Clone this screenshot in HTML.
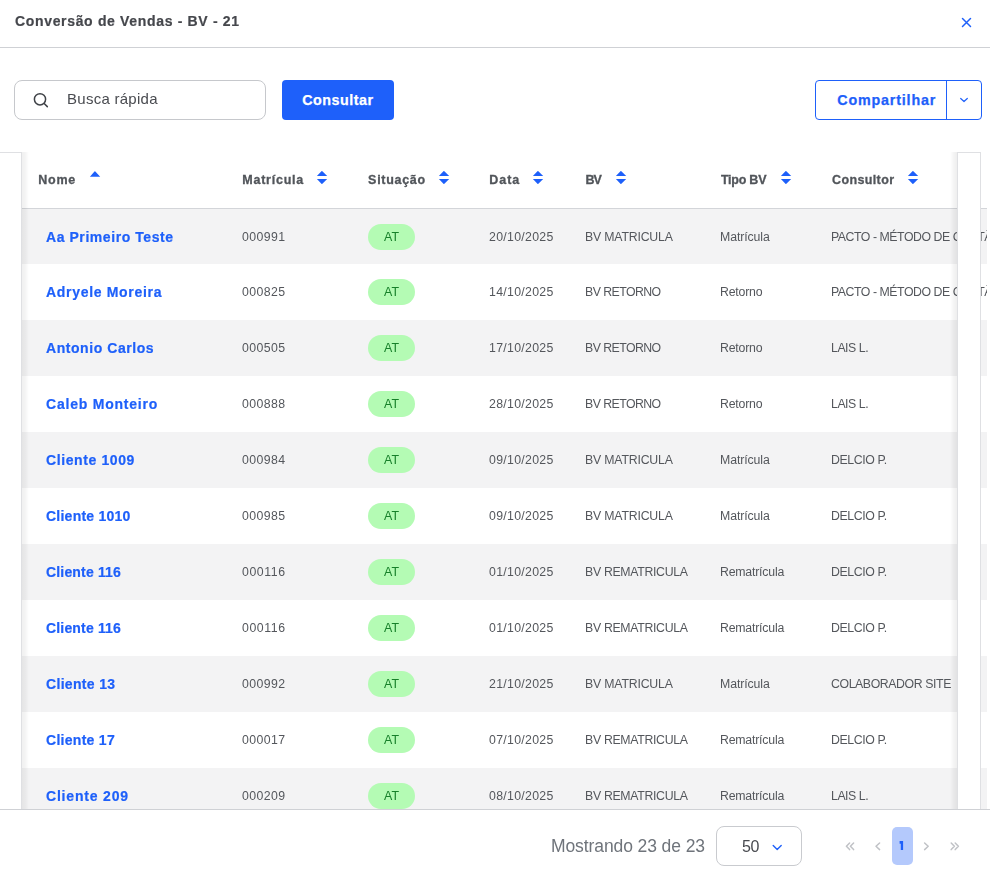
<!DOCTYPE html>
<html><head><meta charset="utf-8"><style>
html,body{margin:0;padding:0;background:#fff}
body{width:990px;height:878px;position:relative;overflow:hidden;font-family:"Liberation Sans",sans-serif}
.a{position:absolute;box-sizing:content-box}
.t{position:absolute;white-space:nowrap}
.g{will-change:transform}
</style></head><body>
<div class="t g" style="left:14.50px;top:14.00px;font-size:14px;line-height:14px;font-weight:700;color:#45474c;letter-spacing:0.664px;-webkit-text-stroke:0.2px #45474c">Conversão de Vendas - BV - 21</div>
<svg class="a" style="left:960px;top:16px" width="13" height="13" viewBox="0 0 13 13"><path d="M2.5 2.5L10.5 10.5M10.5 2.5L2.5 10.5" stroke="#1e60fa" stroke-width="1.5" stroke-linecap="round"/></svg>
<div class="a" style="left:0;top:47px;width:990px;height:1px;background:#cfd1d5"></div>
<div class="a" style="left:14px;top:80px;width:250px;height:38px;border:1px solid #c6c8cc;border-radius:8px"></div>
<svg class="a" style="left:32px;top:91px" width="18" height="18" viewBox="0 0 18 18"><circle cx="8" cy="8.3" r="5.6" fill="none" stroke="#3f4247" stroke-width="1.5"/><path d="M12.2 12.5L15.3 15.6" stroke="#3f4247" stroke-width="1.5" stroke-linecap="round"/></svg>
<div class="t g" style="left:66.90px;top:91.20px;font-size:15px;line-height:15px;font-weight:400;color:#494b50;letter-spacing:0.268px;">Busca rápida</div>
<div class="a" style="left:282px;top:80px;width:112px;height:40px;background:#1e60fa;border-radius:4px"></div>
<div class="t" style="left:302.20px;top:92.55px;font-size:14.3px;line-height:14.3px;font-weight:700;color:#ffffff;letter-spacing:0.531px;-webkit-text-stroke:0.25px #fff">Consultar</div>
<div class="a" style="left:815px;top:80px;width:165px;height:38px;border:1px solid #1e60fa;border-radius:4px"></div>
<div class="a" style="left:946px;top:81px;width:1px;height:38px;background:#1e60fa"></div>
<div class="t" style="left:837.30px;top:92.85px;font-size:14.3px;line-height:14.3px;font-weight:700;color:#1e60fa;letter-spacing:0.818px;-webkit-text-stroke:0.25px #1e60fa">Compartilhar</div>
<svg class="a" style="left:958px;top:95px" width="12" height="10" viewBox="0 0 12 10"><path d="M2.7 3.5L6 6.5L9.3 3.5" fill="none" stroke="#1e60fa" stroke-width="1.2" stroke-linecap="round" stroke-linejoin="round"/></svg>
<div class="a" style="left:0;top:0;width:990px;height:809px;overflow:hidden"><div class="a" style="left:0;top:208px;width:987px;height:56px;background:#f3f3f4"></div><div class="a" style="left:0;top:320px;width:987px;height:56px;background:#f3f3f4"></div><div class="a" style="left:0;top:432px;width:987px;height:56px;background:#f3f3f4"></div><div class="a" style="left:0;top:544px;width:987px;height:56px;background:#f3f3f4"></div><div class="a" style="left:0;top:656px;width:987px;height:56px;background:#f3f3f4"></div><div class="a" style="left:0;top:768px;width:987px;height:56px;background:#f3f3f4"></div><div class="a" style="left:0;top:208px;width:987px;height:1px;background:#d3d5d9"></div><div class="t" style="left:38.30px;top:173.75px;font-size:12.5px;line-height:12.5px;font-weight:700;color:#51555a;letter-spacing:0.750px;-webkit-text-stroke:0.3px #51555a">Nome</div><svg class="a" style="left:88.8px;top:169px" width="12" height="16" viewBox="0 0 12 16"><path d="M0.9 7.8L5.45 2.6Q5.9 2.1 6.35 2.6L11.2 7.8Z" fill="#1e60fa"/></svg><div class="t" style="left:242.30px;top:173.75px;font-size:12.5px;line-height:12.5px;font-weight:700;color:#51555a;letter-spacing:0.756px;-webkit-text-stroke:0.3px #51555a">Matrícula</div><svg class="a" style="left:316.3px;top:169px" width="12" height="17" viewBox="0 0 12 17"><path d="M0.9 7.1L5.45 2.3Q5.9 1.8 6.35 2.3L11.2 7.1Z M0.9 9.9L5.45 14.7Q5.9 15.2 6.35 14.7L11.2 9.9Z" fill="#1e60fa"/></svg><div class="t" style="left:368.10px;top:173.75px;font-size:12.5px;line-height:12.5px;font-weight:700;color:#51555a;letter-spacing:0.700px;-webkit-text-stroke:0.3px #51555a">Situação</div><svg class="a" style="left:437.8px;top:169px" width="12" height="17" viewBox="0 0 12 17"><path d="M0.9 7.1L5.45 2.3Q5.9 1.8 6.35 2.3L11.2 7.1Z M0.9 9.9L5.45 14.7Q5.9 15.2 6.35 14.7L11.2 9.9Z" fill="#1e60fa"/></svg><div class="t" style="left:489.30px;top:173.75px;font-size:12.5px;line-height:12.5px;font-weight:700;color:#51555a;letter-spacing:0.933px;-webkit-text-stroke:0.3px #51555a">Data</div><svg class="a" style="left:532.3px;top:169px" width="12" height="17" viewBox="0 0 12 17"><path d="M0.9 7.1L5.45 2.3Q5.9 1.8 6.35 2.3L11.2 7.1Z M0.9 9.9L5.45 14.7Q5.9 15.2 6.35 14.7L11.2 9.9Z" fill="#1e60fa"/></svg><div class="t" style="left:585.50px;top:173.75px;font-size:12.5px;line-height:12.5px;font-weight:700;color:#51555a;letter-spacing:-0.950px;-webkit-text-stroke:0.3px #51555a">BV</div><svg class="a" style="left:615.0px;top:169px" width="12" height="17" viewBox="0 0 12 17"><path d="M0.9 7.1L5.45 2.3Q5.9 1.8 6.35 2.3L11.2 7.1Z M0.9 9.9L5.45 14.7Q5.9 15.2 6.35 14.7L11.2 9.9Z" fill="#1e60fa"/></svg><div class="t" style="left:720.90px;top:173.75px;font-size:12.5px;line-height:12.5px;font-weight:700;color:#51555a;letter-spacing:-0.233px;-webkit-text-stroke:0.3px #51555a">Tipo BV</div><svg class="a" style="left:779.7px;top:169px" width="12" height="17" viewBox="0 0 12 17"><path d="M0.9 7.1L5.45 2.3Q5.9 1.8 6.35 2.3L11.2 7.1Z M0.9 9.9L5.45 14.7Q5.9 15.2 6.35 14.7L11.2 9.9Z" fill="#1e60fa"/></svg><div class="t" style="left:832.00px;top:173.75px;font-size:12.5px;line-height:12.5px;font-weight:700;color:#51555a;letter-spacing:0.375px;-webkit-text-stroke:0.3px #51555a">Consultor</div><svg class="a" style="left:906.7px;top:169px" width="12" height="17" viewBox="0 0 12 17"><path d="M0.9 7.1L5.45 2.3Q5.9 1.8 6.35 2.3L11.2 7.1Z M0.9 9.9L5.45 14.7Q5.9 15.2 6.35 14.7L11.2 9.9Z" fill="#1e60fa"/></svg><div class="t" style="left:46.00px;top:230.00px;font-size:14px;line-height:14px;font-weight:700;color:#1e60fa;letter-spacing:0.562px;-webkit-text-stroke:0.2px #1e60fa">Aa Primeiro Teste</div><div class="t g" style="left:242.00px;top:231.35px;font-size:12.3px;line-height:12.3px;font-weight:400;color:#54575c;letter-spacing:0.390px;">000991</div><div class="a" style="left:368px;top:224px;width:47px;height:26px;border-radius:13px;background:#b4fbb4"></div><div class="t" style="left:384.00px;top:231.40px;font-size:12.4px;line-height:12.4px;font-weight:400;color:#17802a;letter-spacing:0.050px;">AT</div><div class="t g" style="left:488.80px;top:231.35px;font-size:12.3px;line-height:12.3px;font-weight:400;color:#54575c;letter-spacing:0.306px;">20/10/2025</div><div class="t g" style="left:584.80px;top:231.35px;font-size:12.3px;line-height:12.3px;font-weight:400;color:#54575c;letter-spacing:-0.191px;">BV MATRICULA</div><div class="t g" style="left:719.70px;top:231.35px;font-size:12.3px;line-height:12.3px;font-weight:400;color:#54575c;letter-spacing:-0.100px;">Matrícula</div><div class="t g" style="left:830.80px;top:231.35px;font-size:12.3px;line-height:12.3px;font-weight:400;color:#54575c;letter-spacing:0.000px;letter-spacing:-0.453px">PACTO - MÉTODO DE GESTÃO</div><div class="t" style="left:46.00px;top:285.00px;font-size:14px;line-height:14px;font-weight:700;color:#1e60fa;letter-spacing:0.689px;-webkit-text-stroke:0.2px #1e60fa">Adryele Moreira</div><div class="t g" style="left:242.00px;top:286.35px;font-size:12.3px;line-height:12.3px;font-weight:400;color:#54575c;letter-spacing:0.390px;">000825</div><div class="a" style="left:368px;top:279px;width:47px;height:26px;border-radius:13px;background:#b4fbb4"></div><div class="t" style="left:384.00px;top:286.40px;font-size:12.4px;line-height:12.4px;font-weight:400;color:#17802a;letter-spacing:0.050px;">AT</div><div class="t g" style="left:488.80px;top:286.35px;font-size:12.3px;line-height:12.3px;font-weight:400;color:#54575c;letter-spacing:0.306px;">14/10/2025</div><div class="t g" style="left:584.80px;top:286.35px;font-size:12.3px;line-height:12.3px;font-weight:400;color:#54575c;letter-spacing:-0.544px;">BV RETORNO</div><div class="t g" style="left:719.70px;top:286.35px;font-size:12.3px;line-height:12.3px;font-weight:400;color:#54575c;letter-spacing:-0.192px;">Retorno</div><div class="t g" style="left:830.80px;top:286.35px;font-size:12.3px;line-height:12.3px;font-weight:400;color:#54575c;letter-spacing:0.000px;letter-spacing:-0.453px">PACTO - MÉTODO DE GESTÃO</div><div class="t" style="left:46.00px;top:341.00px;font-size:14px;line-height:14px;font-weight:700;color:#1e60fa;letter-spacing:0.558px;-webkit-text-stroke:0.2px #1e60fa">Antonio Carlos</div><div class="t g" style="left:242.00px;top:342.35px;font-size:12.3px;line-height:12.3px;font-weight:400;color:#54575c;letter-spacing:0.390px;">000505</div><div class="a" style="left:368px;top:335px;width:47px;height:26px;border-radius:13px;background:#b4fbb4"></div><div class="t" style="left:384.00px;top:342.40px;font-size:12.4px;line-height:12.4px;font-weight:400;color:#17802a;letter-spacing:0.050px;">AT</div><div class="t g" style="left:488.80px;top:342.35px;font-size:12.3px;line-height:12.3px;font-weight:400;color:#54575c;letter-spacing:0.306px;">17/10/2025</div><div class="t g" style="left:584.80px;top:342.35px;font-size:12.3px;line-height:12.3px;font-weight:400;color:#54575c;letter-spacing:-0.544px;">BV RETORNO</div><div class="t g" style="left:719.70px;top:342.35px;font-size:12.3px;line-height:12.3px;font-weight:400;color:#54575c;letter-spacing:-0.192px;">Retorno</div><div class="t g" style="left:830.80px;top:342.35px;font-size:12.3px;line-height:12.3px;font-weight:400;color:#54575c;letter-spacing:-0.458px;">LAIS L.</div><div class="t" style="left:46.00px;top:397.00px;font-size:14px;line-height:14px;font-weight:700;color:#1e60fa;letter-spacing:0.785px;-webkit-text-stroke:0.2px #1e60fa">Caleb Monteiro</div><div class="t g" style="left:242.00px;top:398.35px;font-size:12.3px;line-height:12.3px;font-weight:400;color:#54575c;letter-spacing:0.390px;">000888</div><div class="a" style="left:368px;top:391px;width:47px;height:26px;border-radius:13px;background:#b4fbb4"></div><div class="t" style="left:384.00px;top:398.40px;font-size:12.4px;line-height:12.4px;font-weight:400;color:#17802a;letter-spacing:0.050px;">AT</div><div class="t g" style="left:488.80px;top:398.35px;font-size:12.3px;line-height:12.3px;font-weight:400;color:#54575c;letter-spacing:0.306px;">28/10/2025</div><div class="t g" style="left:584.80px;top:398.35px;font-size:12.3px;line-height:12.3px;font-weight:400;color:#54575c;letter-spacing:-0.544px;">BV RETORNO</div><div class="t g" style="left:719.70px;top:398.35px;font-size:12.3px;line-height:12.3px;font-weight:400;color:#54575c;letter-spacing:-0.192px;">Retorno</div><div class="t g" style="left:830.80px;top:398.35px;font-size:12.3px;line-height:12.3px;font-weight:400;color:#54575c;letter-spacing:-0.458px;">LAIS L.</div><div class="t" style="left:46.00px;top:453.00px;font-size:14px;line-height:14px;font-weight:700;color:#1e60fa;letter-spacing:0.609px;-webkit-text-stroke:0.2px #1e60fa">Cliente 1009</div><div class="t g" style="left:242.00px;top:454.35px;font-size:12.3px;line-height:12.3px;font-weight:400;color:#54575c;letter-spacing:0.390px;">000984</div><div class="a" style="left:368px;top:447px;width:47px;height:26px;border-radius:13px;background:#b4fbb4"></div><div class="t" style="left:384.00px;top:454.40px;font-size:12.4px;line-height:12.4px;font-weight:400;color:#17802a;letter-spacing:0.050px;">AT</div><div class="t g" style="left:488.80px;top:454.35px;font-size:12.3px;line-height:12.3px;font-weight:400;color:#54575c;letter-spacing:0.306px;">09/10/2025</div><div class="t g" style="left:584.80px;top:454.35px;font-size:12.3px;line-height:12.3px;font-weight:400;color:#54575c;letter-spacing:-0.191px;">BV MATRICULA</div><div class="t g" style="left:719.70px;top:454.35px;font-size:12.3px;line-height:12.3px;font-weight:400;color:#54575c;letter-spacing:-0.100px;">Matrícula</div><div class="t g" style="left:830.80px;top:454.35px;font-size:12.3px;line-height:12.3px;font-weight:400;color:#54575c;letter-spacing:-0.381px;">DELCIO P.</div><div class="t" style="left:46.00px;top:509.00px;font-size:14px;line-height:14px;font-weight:700;color:#1e60fa;letter-spacing:0.245px;-webkit-text-stroke:0.2px #1e60fa">Cliente 1010</div><div class="t g" style="left:242.00px;top:510.35px;font-size:12.3px;line-height:12.3px;font-weight:400;color:#54575c;letter-spacing:0.390px;">000985</div><div class="a" style="left:368px;top:503px;width:47px;height:26px;border-radius:13px;background:#b4fbb4"></div><div class="t" style="left:384.00px;top:510.40px;font-size:12.4px;line-height:12.4px;font-weight:400;color:#17802a;letter-spacing:0.050px;">AT</div><div class="t g" style="left:488.80px;top:510.35px;font-size:12.3px;line-height:12.3px;font-weight:400;color:#54575c;letter-spacing:0.306px;">09/10/2025</div><div class="t g" style="left:584.80px;top:510.35px;font-size:12.3px;line-height:12.3px;font-weight:400;color:#54575c;letter-spacing:-0.191px;">BV MATRICULA</div><div class="t g" style="left:719.70px;top:510.35px;font-size:12.3px;line-height:12.3px;font-weight:400;color:#54575c;letter-spacing:-0.100px;">Matrícula</div><div class="t g" style="left:830.80px;top:510.35px;font-size:12.3px;line-height:12.3px;font-weight:400;color:#54575c;letter-spacing:-0.381px;">DELCIO P.</div><div class="t" style="left:46.00px;top:565.00px;font-size:14px;line-height:14px;font-weight:700;color:#1e60fa;letter-spacing:0.165px;-webkit-text-stroke:0.2px #1e60fa">Cliente 116</div><div class="t g" style="left:242.00px;top:566.35px;font-size:12.3px;line-height:12.3px;font-weight:400;color:#54575c;letter-spacing:0.570px;">000116</div><div class="a" style="left:368px;top:559px;width:47px;height:26px;border-radius:13px;background:#b4fbb4"></div><div class="t" style="left:384.00px;top:566.40px;font-size:12.4px;line-height:12.4px;font-weight:400;color:#17802a;letter-spacing:0.050px;">AT</div><div class="t g" style="left:488.80px;top:566.35px;font-size:12.3px;line-height:12.3px;font-weight:400;color:#54575c;letter-spacing:0.306px;">01/10/2025</div><div class="t g" style="left:584.80px;top:566.35px;font-size:12.3px;line-height:12.3px;font-weight:400;color:#54575c;letter-spacing:-0.312px;">BV REMATRICULA</div><div class="t g" style="left:719.70px;top:566.35px;font-size:12.3px;line-height:12.3px;font-weight:400;color:#54575c;letter-spacing:-0.200px;">Rematrícula</div><div class="t g" style="left:830.80px;top:566.35px;font-size:12.3px;line-height:12.3px;font-weight:400;color:#54575c;letter-spacing:-0.381px;">DELCIO P.</div><div class="t" style="left:46.00px;top:621.00px;font-size:14px;line-height:14px;font-weight:700;color:#1e60fa;letter-spacing:0.165px;-webkit-text-stroke:0.2px #1e60fa">Cliente 116</div><div class="t g" style="left:242.00px;top:622.35px;font-size:12.3px;line-height:12.3px;font-weight:400;color:#54575c;letter-spacing:0.570px;">000116</div><div class="a" style="left:368px;top:615px;width:47px;height:26px;border-radius:13px;background:#b4fbb4"></div><div class="t" style="left:384.00px;top:622.40px;font-size:12.4px;line-height:12.4px;font-weight:400;color:#17802a;letter-spacing:0.050px;">AT</div><div class="t g" style="left:488.80px;top:622.35px;font-size:12.3px;line-height:12.3px;font-weight:400;color:#54575c;letter-spacing:0.306px;">01/10/2025</div><div class="t g" style="left:584.80px;top:622.35px;font-size:12.3px;line-height:12.3px;font-weight:400;color:#54575c;letter-spacing:-0.312px;">BV REMATRICULA</div><div class="t g" style="left:719.70px;top:622.35px;font-size:12.3px;line-height:12.3px;font-weight:400;color:#54575c;letter-spacing:-0.200px;">Rematrícula</div><div class="t g" style="left:830.80px;top:622.35px;font-size:12.3px;line-height:12.3px;font-weight:400;color:#54575c;letter-spacing:-0.381px;">DELCIO P.</div><div class="t" style="left:46.00px;top:677.00px;font-size:14px;line-height:14px;font-weight:700;color:#1e60fa;letter-spacing:0.328px;-webkit-text-stroke:0.2px #1e60fa">Cliente 13</div><div class="t g" style="left:242.00px;top:678.35px;font-size:12.3px;line-height:12.3px;font-weight:400;color:#54575c;letter-spacing:0.390px;">000992</div><div class="a" style="left:368px;top:671px;width:47px;height:26px;border-radius:13px;background:#b4fbb4"></div><div class="t" style="left:384.00px;top:678.40px;font-size:12.4px;line-height:12.4px;font-weight:400;color:#17802a;letter-spacing:0.050px;">AT</div><div class="t g" style="left:488.80px;top:678.35px;font-size:12.3px;line-height:12.3px;font-weight:400;color:#54575c;letter-spacing:0.306px;">21/10/2025</div><div class="t g" style="left:584.80px;top:678.35px;font-size:12.3px;line-height:12.3px;font-weight:400;color:#54575c;letter-spacing:-0.191px;">BV MATRICULA</div><div class="t g" style="left:719.70px;top:678.35px;font-size:12.3px;line-height:12.3px;font-weight:400;color:#54575c;letter-spacing:-0.100px;">Matrícula</div><div class="t g" style="left:830.80px;top:678.35px;font-size:12.3px;line-height:12.3px;font-weight:400;color:#54575c;letter-spacing:-0.403px;">COLABORADOR SITE</div><div class="t" style="left:46.00px;top:733.00px;font-size:14px;line-height:14px;font-weight:700;color:#1e60fa;letter-spacing:0.283px;-webkit-text-stroke:0.2px #1e60fa">Cliente 17</div><div class="t g" style="left:242.00px;top:734.35px;font-size:12.3px;line-height:12.3px;font-weight:400;color:#54575c;letter-spacing:0.390px;">000017</div><div class="a" style="left:368px;top:727px;width:47px;height:26px;border-radius:13px;background:#b4fbb4"></div><div class="t" style="left:384.00px;top:734.40px;font-size:12.4px;line-height:12.4px;font-weight:400;color:#17802a;letter-spacing:0.050px;">AT</div><div class="t g" style="left:488.80px;top:734.35px;font-size:12.3px;line-height:12.3px;font-weight:400;color:#54575c;letter-spacing:0.306px;">07/10/2025</div><div class="t g" style="left:584.80px;top:734.35px;font-size:12.3px;line-height:12.3px;font-weight:400;color:#54575c;letter-spacing:-0.312px;">BV REMATRICULA</div><div class="t g" style="left:719.70px;top:734.35px;font-size:12.3px;line-height:12.3px;font-weight:400;color:#54575c;letter-spacing:-0.200px;">Rematrícula</div><div class="t g" style="left:830.80px;top:734.35px;font-size:12.3px;line-height:12.3px;font-weight:400;color:#54575c;letter-spacing:-0.381px;">DELCIO P.</div><div class="t" style="left:46.00px;top:789.00px;font-size:14px;line-height:14px;font-weight:700;color:#1e60fa;letter-spacing:0.810px;-webkit-text-stroke:0.2px #1e60fa">Cliente 209</div><div class="t g" style="left:242.00px;top:790.35px;font-size:12.3px;line-height:12.3px;font-weight:400;color:#54575c;letter-spacing:0.390px;">000209</div><div class="a" style="left:368px;top:783px;width:47px;height:26px;border-radius:13px;background:#b4fbb4"></div><div class="t" style="left:384.00px;top:790.40px;font-size:12.4px;line-height:12.4px;font-weight:400;color:#17802a;letter-spacing:0.050px;">AT</div><div class="t g" style="left:488.80px;top:790.35px;font-size:12.3px;line-height:12.3px;font-weight:400;color:#54575c;letter-spacing:0.306px;">08/10/2025</div><div class="t g" style="left:584.80px;top:790.35px;font-size:12.3px;line-height:12.3px;font-weight:400;color:#54575c;letter-spacing:-0.312px;">BV REMATRICULA</div><div class="t g" style="left:719.70px;top:790.35px;font-size:12.3px;line-height:12.3px;font-weight:400;color:#54575c;letter-spacing:-0.200px;">Rematrícula</div><div class="t g" style="left:830.80px;top:790.35px;font-size:12.3px;line-height:12.3px;font-weight:400;color:#54575c;letter-spacing:-0.458px;">LAIS L.</div><div class="a" style="left:22px;top:152px;width:7px;height:700px;background:linear-gradient(to right,rgba(0,0,0,0.06),rgba(0,0,0,0.045) 45%,rgba(0,0,0,0))"></div><div class="a" style="left:-1px;top:152px;width:21px;height:700px;background:#fff;border:1px solid #dfe0e3"></div><div class="a" style="left:950px;top:152px;width:7px;height:700px;background:linear-gradient(to left,rgba(0,0,0,0.065),rgba(0,0,0,0.045) 45%,rgba(0,0,0,0))"></div><div class="a" style="left:957px;top:152px;width:22px;height:700px;background:#fff;border:1px solid #dfe0e3"></div><div class="a" style="left:987px;top:152px;width:3px;height:700px;background:#fff"></div></div>
<div class="a" style="left:0;top:809px;width:990px;height:1px;background:#cfd1d5"></div>
<div class="t g" style="left:550.50px;top:837.65px;font-size:17.5px;line-height:17.5px;font-weight:400;color:#6f747b;letter-spacing:-0.097px;">Mostrando 23 de 23</div>
<div class="a" style="left:716px;top:826px;width:84px;height:38px;border:1px solid #c9cbcf;border-radius:8px"></div>
<div class="t g" style="left:742.00px;top:838.50px;font-size:16px;line-height:16px;font-weight:400;color:#494b50;letter-spacing:-0.500px;">50</div>
<svg class="a" style="left:771px;top:843px" width="13" height="9" viewBox="0 0 13 9"><path d="M2.2 2.6L6.2 6.4L10.2 2.6" fill="none" stroke="#1e60fa" stroke-width="1.4" stroke-linecap="round" stroke-linejoin="round"/></svg>
<div class="a" style="left:892px;top:827px;width:21px;height:38px;border-radius:5px;background:#b4c9fc"></div>
<svg class="a" style="left:890px;top:835px" width="20" height="20" viewBox="890 835 20 20"><path d="M899.6 841H903.1V850H900.8V843.7H899.6Z" fill="#1e60fa"/></svg>
<svg class="a" style="left:840px;top:838px" width="130" height="16" viewBox="0 0 130 16"><path d="M9.6 5L6.4 8.3L9.6 11.6M13.6 5L10.4 8.3L13.6 11.6" fill="none" stroke="#c0c2c6" stroke-width="1.5" stroke-linecap="round" stroke-linejoin="round"/><path d="M39.6 5L36 8.3L39.6 11.6" fill="none" stroke="#c0c2c6" stroke-width="1.5" stroke-linecap="round" stroke-linejoin="round"/><path d="M84.6 5L88.2 8.3L84.6 11.6" fill="none" stroke="#c0c2c6" stroke-width="1.5" stroke-linecap="round" stroke-linejoin="round"/><path d="M111.2 5L114.4 8.3L111.2 11.6M115.2 5L118.4 8.3L115.2 11.6" fill="none" stroke="#c0c2c6" stroke-width="1.5" stroke-linecap="round" stroke-linejoin="round"/></svg>
</body></html>
